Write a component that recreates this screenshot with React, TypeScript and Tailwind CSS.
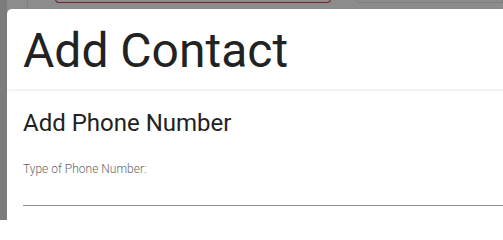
import React from "react";

export default function App() {
  return (
    <div
      className="relative w-[503px] h-[220px] overflow-hidden bg-[#8c8c8c]"
      style={{ fontFamily: "Roboto, 'Liberation Sans', sans-serif" }}
    >
      {/* background page (dimmed) */}
      <div className="flex h-full">
        <div className="w-[7px] h-full bg-[#7c7c7c]" />
        <div className="w-[20px] h-full" />
        <div className="w-px h-full bg-[#7f7f7f]" />
        <div className="w-[27px]" />
        <div className="w-[276px] h-[4px] border-[1.5px] border-t-0 border-[#7a1f2c] rounded-b-[6px] -mt-px" />
        <div className="w-[25px]" />
        <div className="flex-1 h-[4px] border border-t-0 border-[#7e7e7e] rounded-bl-[6px] -mt-px" />
      </div>

      {/* modal */}
      <div className="absolute left-[7px] top-[9px] right-[-20px] bottom-[-20px] bg-white rounded-tl-[5px]">
        <div className="h-[81px] pl-[16px] pt-[14px] shadow-[0_1px_2px_rgba(0,0,0,0.06)] border-b border-[#f2f2f2]">
          <h1 className="text-[48px] leading-[56px] font-normal text-[#222222]">
            Add Contact
          </h1>
        </div>
        <div className="pl-[16px] pt-[19px]">
          <h2 className="text-[24px] leading-[28px] font-normal text-[#222222]">
            Add Phone Number
          </h2>
          <div className="mt-[25px] text-[12px] leading-[14px] font-light text-[#666666]">
            Type of Phone Number:
          </div>
          <div className="mt-[29px] h-px bg-[#8e8e8e]" />
        </div>
      </div>
    </div>
  );
}
